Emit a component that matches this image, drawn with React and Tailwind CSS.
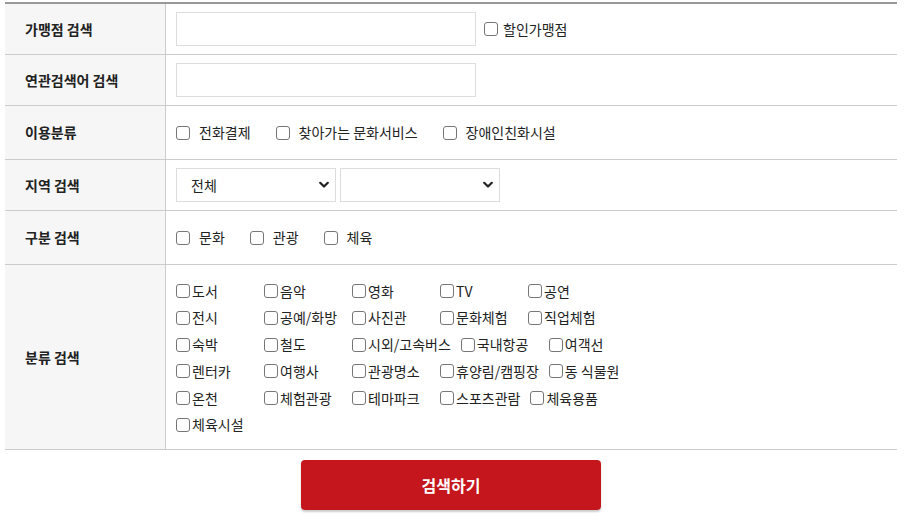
import React from "react";

const font = { fontFamily: '"Noto Sans CJK KR", "Noto Sans", sans-serif' };

function Box() {
  return (
    <input
      type="checkbox"
      className="appearance-none m-0 w-[14px] h-[14px] shrink-0 border border-[#767676] rounded-[3px] bg-white"
    />
  );
}

function Chevron() {
  return (
    <svg width="10" height="7" viewBox="0 0 10 7" className="absolute right-[6px] top-1/2 -translate-y-1/2 pointer-events-none">
      <path d="M1.2 1.2 L5 5 L8.8 1.2" fill="none" stroke="#222" strokeWidth="2.2" strokeLinecap="round" strokeLinejoin="round" />
    </svg>
  );
}

function Row({ label, h, children }) {
  return (
    <div className="flex border-b border-[#cccccc]" style={{ height: h }}>
      <div className="w-[161px] shrink-0 bg-[#f6f6f6] border-r border-[#cccccc] flex items-center pl-[20px] text-[14px] font-bold text-[#222]">
        {label}
      </div>
      <div className="flex-1 flex items-center pl-[10px]">{children}</div>
    </div>
  );
}

function Inline({ items, gap }) {
  return (
    <div className="flex items-center">
      {items.map((t, i) => (
        <label key={t} className={`flex items-center ${i < items.length - 1 ? gap : ""}`}>
          <Box />
          <span className="ml-[9px] text-[14px] text-[#222]">{t}</span>
        </label>
      ))}
    </div>
  );
}

const cats = [
  "도서", "음악", "영화", "TV", "공연",
  "전시", "공예/화방", "사진관", "문화체험", "직업체험",
  "숙박", "철도", "시외/고속버스", "국내항공", "여객선",
  "렌터카", "여행사", "관광명소", "휴양림/캠핑장", "동 식물원",
  "온천", "체험관광", "테마파크", "스포츠관람", "체육용품",
  "체육시설",
];

export default function App() {
  return (
    <div className="w-[916px] h-[519px] bg-white overflow-hidden pt-[2px] pl-[5px]" style={font}>
      <div className="w-[892px] border-t-2 border-[#999999]">
        <Row label="가맹점 검색" h={51}>
          <input className="w-[300px] h-[34px] border border-[#dddddd] outline-none" />
          <label className="flex items-center ml-[8px]">
            <Box />
            <span className="ml-[5px] text-[14px] text-[#222]">할인가맹점</span>
          </label>
        </Row>
        <Row label="연관검색어 검색" h={51}>
          <input className="w-[300px] h-[34px] border border-[#dddddd] outline-none" />
        </Row>
        <Row label="이용분류" h={54}>
          <Inline items={["전화결제", "찾아가는 문화서비스", "장애인친화시설"]} gap="mr-[25px]" />
        </Row>
        <Row label="지역 검색" h={51}>
          <div className="flex gap-[4px]">
            <div className="relative w-[160px] h-[34px] border border-[#dddddd] flex items-center pl-[14px] text-[14px] text-[#222]">
              전체
              <Chevron />
            </div>
            <div className="relative w-[160px] h-[34px] border border-[#dddddd]">
              <Chevron />
            </div>
          </div>
        </Row>
        <Row label="구분 검색" h={54}>
          <Inline items={["문화", "관광", "체육"]} gap="mr-[25px]" />
        </Row>
        <Row label="분류 검색" h={185}>
          <div className="w-[470px] flex flex-wrap pt-[12px] pb-[10px]">
            {cats.map((t) => (
              <label key={t} className="flex items-center min-w-[88px] pr-[10px] h-[26.8px]">
                <Box />
                <span className="ml-[2px] text-[14px] text-[#222] whitespace-nowrap">{t}</span>
              </label>
            ))}
          </div>
        </Row>
      </div>
      <div className="flex justify-center w-[892px] mt-[10px]">
        <button className="w-[300px] h-[50px] bg-[#c4161c] rounded-[4px] text-white text-[16px] font-bold shadow-[0_2px_2px_rgba(0,0,0,0.2)]">
          검색하기
        </button>
      </div>
    </div>
  );
}
